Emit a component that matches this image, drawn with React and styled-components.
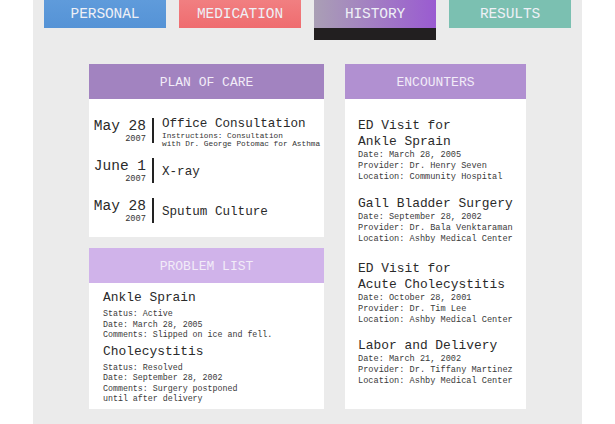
import React from 'react';
import styled, { createGlobalStyle } from 'styled-components';

const GlobalStyle = createGlobalStyle`
  html, body {
    margin: 0;
    padding: 0;
    background: #ffffff;
  }
  body {
    font-family: 'Liberation Mono', 'DejaVu Sans Mono', monospace;
    color: #222;
  }
`;

const Page = styled.div`
  width: 549px;
  min-height: 424px;
  margin-left: 33px;
  background: #ebebeb;
  box-sizing: border-box;
`;

const Tabs = styled.nav`
  display: flex;
  justify-content: space-between;
  align-items: flex-start;
  height: 40px;
  padding: 0 11px;
`;

const Tab = styled.div`
  width: 122px;
  height: 28px;
  line-height: 28px;
  text-align: center;
  font-size: 14.5px;
  letter-spacing: -0.1px;
  color: #eef0f6;
  background: ${(p) => p.$bg};
  border-bottom: ${(p) => (p.$active ? '12px solid #221f20' : 'none')};
`;

const Columns = styled.main`
  display: grid;
  grid-template-columns: 235px 181px;
  column-gap: 21px;
  padding: 24px 56px 15px;
  align-items: stretch;
`;

const Stack = styled.div`
  display: flex;
  flex-direction: column;
  gap: 11px;
`;

const Card = styled.section`
  display: flex;
  flex-direction: column;
  background: #fff;
`;

const CardHeader = styled.h2`
  margin: 0;
  height: 35px;
  line-height: 37px;
  text-align: center;
  font-size: 13px;
  font-weight: normal;
  color: #f2ecf8;
  background: ${(p) => p.$bg};
`;

const PlanBody = styled.div`
  display: flex;
  flex-direction: column;
  gap: 15px;
  padding: 19px 0 14px 3px;
`;

const PlanRow = styled.div`
  display: flex;
  align-items: center;
  height: 25px;
`;

const DateBlock = styled.div`
  width: 54px;
  text-align: right;
  white-space: nowrap;
`;

const Day = styled.div`
  font-size: 14.5px;
  line-height: 16px;
  color: #2a2a2a;
`;

const Year = styled.div`
  font-size: 8.7px;
  line-height: 10px;
  color: #333;
`;

const Divider = styled.div`
  width: 2px;
  height: 25px;
  background: #222;
  margin: 0 8px 0 6px;
`;

const PlanInfo = styled.div`
  white-space: nowrap;
  margin-top: 4px;
`;

const PlanTitle = styled.div`
  font-size: 12.6px;
  line-height: 15px;
  color: #2a2a2a;
`;

const Note = styled.div`
  font-size: 7.75px;
  line-height: 8px;
  color: #333;
`;

const ProblemBody = styled.div`
  display: flex;
  flex-direction: column;
  gap: 3px;
  padding: 7px 14px 4px;
`;

const ItemTitle = styled.div`
  font-size: 12.9px;
  line-height: 16px;
  color: #2a2a2a;
  margin-bottom: ${(p) => p.$mb || 0}px;
`;

const Detail = styled.div`
  font-size: ${(p) => p.$size || 8.3}px;
  line-height: ${(p) => p.$lh || 10.5}px;
  color: #3a3a3a;
  white-space: nowrap;
`;

const EncounterBody = styled.div`
  flex: 1;
  padding: 19px 13px 0;
`;

const Encounter = styled.div`
  margin-top: ${(p) => p.$top}px;
`;

const tabs = [
  { label: 'PERSONAL', bg: 'linear-gradient(#5f9bdb, #5593d6)' },
  { label: 'MEDICATION', bg: 'linear-gradient(#f17f81, #ef6c6f)' },
  { label: 'HISTORY', bg: 'linear-gradient(90deg, #aa9fb5, #9a5bd1)', active: true },
  { label: 'RESULTS', bg: '#7bc0b1' },
];

const plans = [
  {
    day: 'May 28',
    year: '2007',
    title: 'Office Consultation',
    note: ['Instructions: Consultation', 'with Dr. George Potomac for Asthma'],
  },
  { day: 'June 1', year: '2007', title: 'X-ray' },
  { day: 'May 28', year: '2007', title: 'Sputum Culture' },
];

const problems = [
  {
    title: 'Ankle Sprain',
    lines: ['Status: Active', 'Date: March 28, 2005', 'Comments: Slipped on ice and fell.'],
  },
  {
    title: 'Cholecystitis',
    lines: [
      'Status: Resolved',
      'Date: September 28, 2002',
      'Comments: Surgery postponed',
      'until after delivery',
    ],
  },
];

const encounters = [
  {
    title: ['ED Visit for', 'Ankle Sprain'],
    lines: ['Date: March 28, 2005', 'Provider: Dr. Henry Seven', 'Location: Community Hospital'],
    top: 0,
  },
  {
    title: ['Gall Bladder Surgery'],
    lines: [
      'Date: September 28, 2002',
      'Provider: Dr. Bala Venktaraman',
      'Location: Ashby Medical Center',
    ],
    top: 13,
  },
  {
    title: ['ED Visit for', 'Acute Cholecystitis'],
    lines: ['Date: October 28, 2001', 'Provider: Dr. Tim Lee', 'Location: Ashby Medical Center'],
    top: 16,
  },
  {
    title: ['Labor and Delivery'],
    lines: [
      'Date: March 21, 2002',
      'Provider: Dr. Tiffany Martinez',
      'Location: Ashby Medical Center',
    ],
    top: 12,
  },
];

export default function App() {
  return (
    <Page>
      <GlobalStyle />
      <Tabs>
        {tabs.map((t) => (
          <Tab key={t.label} $bg={t.bg} $active={t.active}>
            {t.label}
          </Tab>
        ))}
      </Tabs>

      <Columns>
        <Stack>
          <Card>
            <CardHeader $bg="#a283c0">PLAN OF CARE</CardHeader>
            <PlanBody>
              {plans.map((p, i) => (
                <PlanRow key={i}>
                  <DateBlock>
                    <Day>{p.day}</Day>
                    <Year>{p.year}</Year>
                  </DateBlock>
                  <Divider />
                  <PlanInfo>
                    <PlanTitle>{p.title}</PlanTitle>
                    {p.note && p.note.map((n) => <Note key={n}>{n}</Note>)}
                  </PlanInfo>
                </PlanRow>
              ))}
            </PlanBody>
          </Card>

          <Card>
            <CardHeader $bg="#d0b3ea">PROBLEM LIST</CardHeader>
            <ProblemBody>
              {problems.map((p) => (
                <div key={p.title}>
                  <ItemTitle $mb={3}>{p.title}</ItemTitle>
                  {p.lines.map((l) => (
                    <Detail key={l}>{l}</Detail>
                  ))}
                </div>
              ))}
            </ProblemBody>
          </Card>
        </Stack>

        <Card>
          <CardHeader $bg="#b190d1">ENCOUNTERS</CardHeader>
          <EncounterBody>
            {encounters.map((e, i) => (
              <Encounter key={i} $top={e.top}>
                {e.title.map((t) => (
                  <ItemTitle key={t}>{t}</ItemTitle>
                ))}
                {e.lines.map((l) => (
                  <Detail key={l} $size={8.6} $lh={11}>
                    {l}
                  </Detail>
                ))}
              </Encounter>
            ))}
          </EncounterBody>
        </Card>
      </Columns>
    </Page>
  );
}
